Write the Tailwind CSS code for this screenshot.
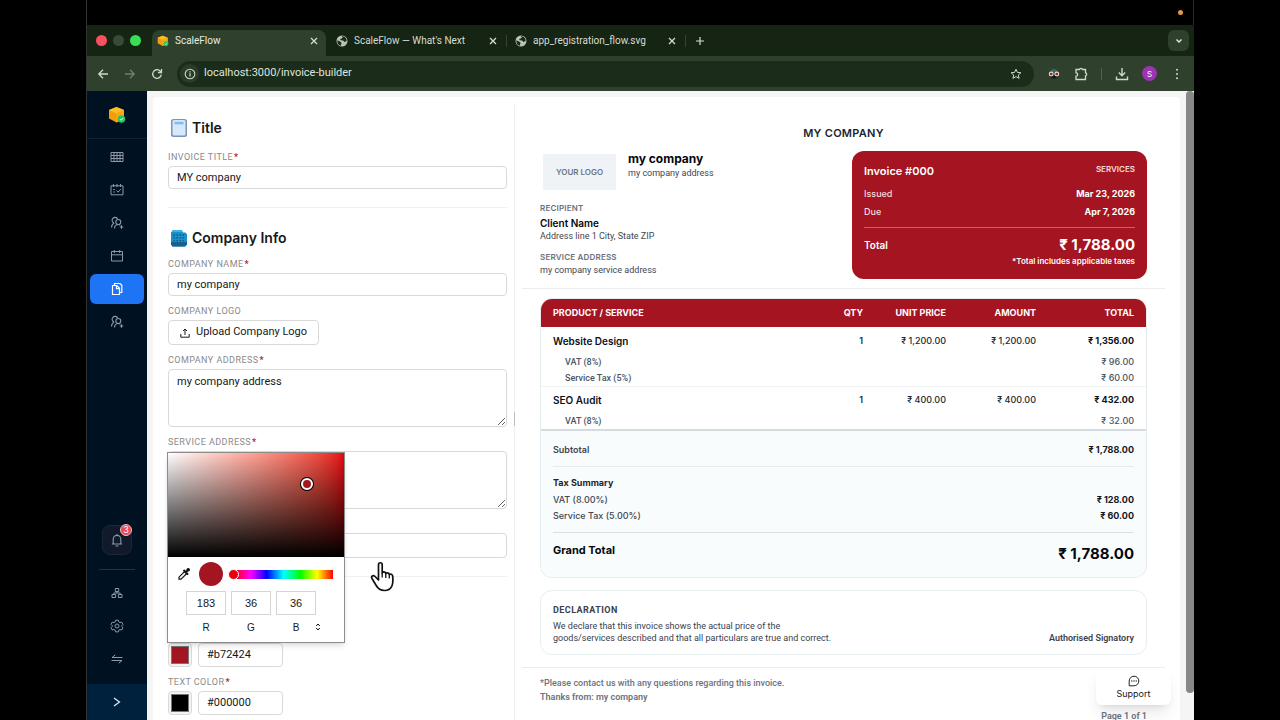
<!DOCTYPE html>
<html lang="en">
<head>
  <meta charset="UTF-8" />
  <meta name="viewport" content="width=device-width, initial-scale=1.0"/>
  <title>ScaleFlow</title>
  <script src="https://cdn.jsdelivr.net/npm/@tailwindcss/browser@4"></script>
</head>
<body class="h-screen overflow-hidden bg-black px-[86px] font-['Inter',sans-serif] text-[#16181c]">

  <!-- shared icons -->
  <svg class="hidden">
    <symbol id="box" viewBox="0 0 18 18">
      <path d="M8.500 1 16 4v8.500L8.500 16.500 1 12.500V4z" fill="#f59e0b"/>
      <path d="M8.500 1 16 4 8.500 7.500 1 4z" fill="#fbbf24"/>
      <path d="M8.500 7.500 16 4v8.500l-7.500 4z" fill="#f9a814"/>
      <circle cx="13.500" cy="13" r="3.700" fill="#22c55e"/>
      <path d="m11.800 13 1.300 1.300 2.200-2.400" fill="none" stroke="#eafff0" stroke-width="1"/>
    </symbol>
    <symbol id="globe" viewBox="0 0 12 12">
      <circle cx="6" cy="6" r="5.500" fill="#b9c4b6"/>
      <path d="M1.300 5.200 4 6.600l1.500 1.200-.6 2.900C2.800 10.500 1.200 8.500 1.300 5.200zM5.600 1.300l1.200.9-1 1.400-1.700.4.500 1.300 2.400.3 1.600 1.300 2-.8c.3-2.700-1.700-4.900-5-4.800z" fill="#1a2a18"/>
    </symbol>
    <symbol id="close" viewBox="0 0 8 8">
      <path d="m1 1 6 6M7 1 1 7" stroke="currentColor" stroke-width="1.300" fill="none"/>
    </symbol>
    <symbol id="people" viewBox="0 0 14 14">
      <g fill="none" stroke="currentColor" stroke-width="1.100">
        <path d="M4 7A2.900 2.900 0 1 1 7.600 3M1.500 11.500C1.600 9.300 2.400 7.800 4.200 7"/>
        <circle cx="8.300" cy="6" r="2.500"/>
        <path d="M4.500 12.500c.1-2.500 1.600-4 3.800-4 .8 0 1.500.2 2 .6M11.500 9.300v3.400M9.800 11h3.400"/>
      </g>
    </symbol>
  </svg>

  <div class="flex h-full flex-col border-l border-[#33352f]">
    <div class="flex h-[25px] shrink-0 items-center justify-end border-r border-[#2a2a2a] bg-black pr-[10px]">
      <span class="size-[5px] rounded-full bg-[#e8983a]"></span>
    </div>

    <!-- tab strip -->
    <header class="flex h-[31px] shrink-0 items-end bg-[#152413] pr-[5px] font-['Roboto',sans-serif] text-[10px] text-[#d5ddd2]">
      <div class="flex h-full w-[65px] shrink-0 items-center gap-[6px] pl-[9px]">
        <span class="size-[11px] rounded-full bg-[#f5515f]"></span>
        <span class="size-[11px] rounded-full bg-[#3a4a38]"></span>
        <span class="size-[11px] rounded-full bg-[#3ddc55]"></span>
      </div>
      <div class="flex h-[26px] w-[174px] items-center rounded-t-lg bg-[#2f412d] pr-2 pb-[5px] pl-[5px]">
        <svg class="size-3"><use href="#box"/></svg>
        <span class="ml-[6px] grow text-[#e6ece4]">ScaleFlow</span>
        <button aria-label="Close tab"><svg class="size-2"><use href="#close"/></svg></button>
      </div>
      <div class="flex h-[26px] w-[181px] items-center pb-[5px] pl-[10px]">
        <svg class="size-3"><use href="#globe"/></svg>
        <span class="ml-[6px] grow">ScaleFlow — What's Next</span>
        <button aria-label="Close tab"><svg class="size-2"><use href="#close"/></svg></button>
        <span class="ml-[9px] h-3 w-px bg-[#34452f]"></span>
      </div>
      <div class="flex h-[26px] w-[179px] items-center pb-[5px] pl-[8px]">
        <svg class="size-3"><use href="#globe"/></svg>
        <span class="ml-[6px] grow">app_registration_flow.svg</span>
        <button aria-label="Close tab"><svg class="size-2"><use href="#close"/></svg></button>
        <span class="ml-[9px] h-3 w-px bg-[#34452f]"></span>
      </div>
      <button aria-label="New tab" class="mb-[10px] ml-[9px]">
        <svg class="size-[10px]" viewBox="0 0 10 10"><path d="M5 1v8M1 5h8" stroke="#d5ddd2" stroke-width="1.200"/></svg>
      </button>
      <button aria-label="Search tabs" class="mb-[5px] ml-auto flex size-[21px] items-center justify-center rounded-md bg-[#2f412d]">
        <svg class="size-2" viewBox="0 0 8 8"><path d="m1.500 2.500 2.500 2.500 2.500-2.500" stroke="#e2e8e0" stroke-width="1.400" fill="none"/></svg>
      </button>
    </header>

    <!-- toolbar -->
    <div class="flex h-[35px] shrink-0 items-center bg-[#2f412d] pr-[15px] pl-[10px] text-[#cfd8cc]">
      <button aria-label="Back"><svg class="size-3" viewBox="0 0 12 12"><path d="M11 6H2M6 1.800 1.800 6 6 10.200" stroke="currentColor" stroke-width="1.300" fill="none"/></svg></button>
      <button aria-label="Forward" class="ml-[15px] text-[#6f7f6c]"><svg class="size-3" viewBox="0 0 12 12"><path d="M1 6h9M6 1.800 10.200 6 6 10.200" stroke="currentColor" stroke-width="1.300" fill="none"/></svg></button>
      <button aria-label="Reload" class="ml-[15px]"><svg class="size-3" viewBox="0 0 12 12"><path d="M10.300 6.500a4.300 4.300 0 1 1-1.300-3.600L10.400 4.400M10.500 1v3.500H7" stroke="currentColor" stroke-width="1.300" fill="none"/></svg></button>
      <div class="ml-[14px] flex h-[26px] grow items-center rounded-full bg-[#1b2c1a] pr-3 pl-[3px]">
        <span class="flex size-[19px] items-center justify-center rounded-full bg-[#2a3b28]">
          <svg class="size-3" viewBox="0 0 12 12"><circle cx="6" cy="6" r="4.800" fill="none" stroke="currentColor" stroke-width="1.100"/><path d="M6 5.300v3.200M6 3.300v1.200" stroke="currentColor" stroke-width="1.200"/></svg>
        </span>
        <input aria-label="Address" class="ml-[5px] grow bg-transparent font-['Roboto',sans-serif] text-[11px] text-[#dfe6dc] outline-none" value="localhost:3000/invoice-builder" />
        <button aria-label="Bookmark"><svg class="size-3" viewBox="0 0 12 12"><path d="m6 1.200 1.400 3.200 3.500.3-2.600 2.300.8 3.400L6 8.600l-3.100 1.800.8-3.400L1.100 4.700l3.500-.3z" fill="none" stroke="currentColor"/></svg></button>
      </div>
      <svg class="ml-[14px] size-3" viewBox="0 0 12 12"><path d="M2 4.500C2 2.500 3.800 1 6 1s4 1.500 4 3.500z" fill="#2f6b6f"/><path d="M2.500 7h7v2.500L6 11 2.500 9.500z" fill="#151c1c"/><circle cx="3.200" cy="6" r="1.900" fill="#7b2e33" stroke="#f0d6d0" stroke-width="1.100"/><circle cx="8.800" cy="6" r="1.900" fill="#7b2e33" stroke="#f0d6d0" stroke-width="1.100"/></svg>
      <button aria-label="Extensions" class="ml-[14px]"><svg class="size-[14px]" viewBox="0 0 14 14"><path d="M2 2.500h3.500a1.500 1.200 0 0 1 3 0H11.500v3.300a1.200 1.500 0 0 1 0 3v3.700H2V9.200a1.700 1.700 0 0 0 0-3.400z" stroke="currentColor" stroke-width="1.300" fill="none"/></svg></button>
      <span class="mx-[13px] h-3 w-px bg-[#50614d]"></span>
      <button aria-label="Downloads"><svg class="size-[14px]" viewBox="0 0 14 14"><path d="M7 1v7.500M3.800 5.500 7 8.700l3.200-3.200M1.500 9.500v3h11v-3" stroke="currentColor" stroke-width="1.400" fill="none"/></svg></button>
      <span class="ml-[13px] flex size-[15px] items-center justify-center rounded-full bg-[#9a34b0] text-[8px] text-white">S</span>
      <button aria-label="Menu" class="ml-[18px]"><svg class="h-3 w-1" viewBox="0 0 4 12"><g fill="currentColor"><circle cx="2" cy="1.800" r="1"/><circle cx="2" cy="6" r="1"/><circle cx="2" cy="10.200" r="1"/></g></svg></button>
    </div>

    <div class="flex min-h-0 grow bg-[#f5f5f5]">

      <!-- sidebar -->
      <aside class="flex w-[60px] shrink-0 flex-col bg-[#001122] text-[#8d99a6]">
        <div class="flex h-[48px] shrink-0 items-center justify-center border-b border-[#0d2236]">
          <svg class="size-[18px]"><use href="#box"/></svg>
        </div>
        <nav class="flex flex-col gap-[3px] px-[3px] pt-[3px]">
          <a href="#" aria-label="Dashboard" class="flex h-[30px] items-center justify-center">
            <svg class="size-[14px]" viewBox="0 0 14 14"><path d="M1 2.500h12v9H1zM1 5.500h12M1 8.500h12M4 2.500v9M7 2.500v9M10 2.500v9" stroke="currentColor" fill="none"/></svg>
          </a>
          <a href="#" aria-label="Schedule" class="flex h-[30px] items-center justify-center">
            <svg class="size-[14px]" viewBox="0 0 14 14"><path d="M1 2.800h12v9H1zM3.500 1v3M7 1v3M10.500 1v3M3.200 6.500h1.600M3.200 9h1.600M6.500 7.500 8 9.200l2.800-3" stroke="currentColor" fill="none"/></svg>
          </a>
          <a href="#" aria-label="Team" class="flex h-[30px] items-center justify-center">
            <svg class="size-[14px]"><use href="#people"/></svg>
          </a>
          <a href="#" aria-label="Calendar" class="flex h-[30px] items-center justify-center">
            <svg class="size-[14px]" viewBox="0 0 14 14"><path d="M1.500 2.500h11v9.500h-11zM1.500 5.800h11M4.300 1v3M9.700 1v3" stroke="currentColor" fill="none"/></svg>
          </a>
          <a href="#" aria-label="Invoices" class="flex h-[30px] items-center justify-center rounded-md bg-[#1d74f5] text-white">
            <svg class="size-[14px]" viewBox="0 0 14 14"><path d="M2.500 3.500h4.300l2.700 2.800V12.500h-7zM6.500 3.700v2.900h2.900M4.500 3.300V1.500H10l1.800 1.700v7.300H9.700" stroke="currentColor" stroke-width="1.200" fill="none"/></svg>
          </a>
          <a href="#" aria-label="Clients" class="flex h-[30px] items-center justify-center">
            <svg class="size-[14px]"><use href="#people"/></svg>
          </a>
        </nav>
        <div class="mt-auto flex flex-col items-center">
          <button aria-label="Notifications" class="relative flex size-[30px] items-center justify-center rounded-lg border border-[#1c2638] bg-[#111a2b]">
            <svg class="size-[14px]" viewBox="0 0 14 14"><path d="M1.800 11h10.400M3.200 11V6.200a3.800 3.800 0 0 1 7.600 0V11M7 1v1.300M5.500 13h3" stroke="currentColor" stroke-width="1.100" fill="none"/></svg>
            <span class="absolute -top-[2px] -right-[1px] flex size-3 items-center justify-center rounded-full border border-[#f4b7bc] bg-[#e5485a] text-[9px] text-white">3</span>
          </button>
          <span class="mt-[14px] h-px w-9 bg-[#25323f]"></span>
        </div>
        <nav class="flex flex-col gap-[3px] px-[3px] pt-[8px] pb-[10px]">
          <a href="#" aria-label="Workspace" class="flex h-[30px] items-center justify-center">
            <svg class="size-3" viewBox="0 0 12 12"><path d="M4.300 1.500h3.400v3H4.300zM1 7.500h3.600v3H1zM7.400 7.500H11v3H7.400zM6 4.500V6M2.800 7.500V6h6.400v1.500" stroke="currentColor" fill="none"/></svg>
          </a>
          <a href="#" aria-label="Settings" class="flex h-[30px] items-center justify-center">
            <svg class="size-[14px]" viewBox="0 0 14 14"><path d="M5.600 1.200h2.800l.4 1.700 1.200.7 1.700-.5 1.300 2.300L11.800 6.600v.9l1.200 1.200-1.300 2.300-1.700-.5-1.200.7-.4 1.700H5.600l-.4-1.700-1.200-.7-1.700.5L1 8.700l1.200-1.200v-.9L1 5.400l1.300-2.300 1.700.5 1.200-.7z" stroke="currentColor" fill="none"/><circle cx="7" cy="7" r="2" stroke="currentColor" fill="none"/></svg>
          </a>
          <a href="#" aria-label="Switch" class="flex h-[30px] items-center justify-center">
            <svg class="size-3" viewBox="0 0 12 12"><path d="M11.500 4.500H1L4.300 1.800M.5 7.500H11L7.700 10.200" stroke="currentColor" fill="none"/></svg>
          </a>
        </nav>
        <button aria-label="Expand" class="flex h-9 shrink-0 items-center justify-center bg-[#00213d] text-[#e8eef4]">
          <svg class="size-[10px]" viewBox="0 0 10 10"><path d="m2 1 5.500 4L2 9" stroke="currentColor" stroke-width="1.200" fill="none"/></svg>
        </button>
      </aside>

      <main class="relative mt-[6px] mr-[6px] ml-[6px] flex min-w-0 grow rounded-t bg-white">

        <!-- form -->
        <form class="w-[361px] shrink-0 pt-[17px] pr-[7px] pl-[15px] font-['Roboto',sans-serif] text-[11px]">
          <section class="border-b border-[#f0f0f0] pb-[18px]">
            <h2 class="mb-2 flex items-center gap-1 font-['Inter',sans-serif] text-[14px] leading-7 font-semibold">
              <svg class="ml-[2px] size-[18px]" viewBox="0 0 18 18"><rect x="1" y="0" width="16" height="18" rx="2.500" fill="#7d93b5"/><rect x="2.500" y="1" width="13" height="15.500" rx="1.500" fill="#d6e9fb"/><path d="M4.500 2.800h9v2.500h-9z" fill="#7dbdf0"/></svg>
              Title
            </h2>
            <label for="invoiceTitle" class="mb-[2px] block text-[9px] leading-[14px] tracking-wider text-[#8a8a8a]">INVOICE TITLE<span class="ml-px font-bold text-[#b72424]">*</span></label>
            <input id="invoiceTitle" class="block h-[23px] w-full rounded border border-[#d9d9d9] px-2" value="MY company" />
          </section>

          <section class="flex flex-col gap-2 border-b border-[#f0f0f0] pt-4 pb-[18px]">
            <h2 class="-mb-[3px] flex items-center gap-1 font-['Inter',sans-serif] text-[14px] leading-7 font-semibold">
              <svg class="ml-[2px] size-[18px]" viewBox="0 0 18 18"><path d="M3 1h9l1 2.500h2.500l1.500 2v10l-2 2H2.500L1 15.500V3.500z" fill="#1b8fc9"/><path d="M1 13h16v2.500L15 17.500H2.500L1 15.500z" fill="#17618f"/><path d="M3.500 6h11M3.500 8.800h11M3.500 11.600h11" stroke="#0d5a88" stroke-width="1.300" stroke-dasharray="1.500 1.500"/><path d="M3 1h9v2H2z" fill="#35b5e5"/></svg>
              Company Info
            </h2>
            <div>
              <label for="companyName" class="mb-[2px] block text-[9px] leading-[14px] tracking-wider text-[#8a8a8a]">COMPANY NAME<span class="ml-px font-bold text-[#b72424]">*</span></label>
              <input id="companyName" class="block h-[23px] w-full rounded border border-[#d9d9d9] px-2" value="my company" />
            </div>
            <div>
              <label for="companyLogo" class="mb-[2px] block text-[9px] leading-[14px] tracking-wider text-[#8a8a8a]">COMPANY LOGO</label>
              <button id="companyLogo" type="button" class="flex h-[25px] items-center gap-[6px] rounded border border-[#d9d9d9] px-[11px]">
                <svg class="size-[10px]" viewBox="0 0 10 10"><path d="M.8 6v3.200h8.400V6M5 7V1M3 3l2-2 2 2" stroke="currentColor" fill="none"/></svg>
                Upload Company Logo
              </button>
            </div>
            <div>
              <label for="companyAddress" class="mb-[2px] block text-[9px] leading-[14px] tracking-wider text-[#8a8a8a]">COMPANY ADDRESS<span class="ml-px font-bold text-[#b72424]">*</span></label>
              <textarea id="companyAddress" class="block h-[58px] w-full rounded border border-[#d9d9d9] px-2 py-1">my company address</textarea>
            </div>
            <div>
              <label for="serviceAddress" class="mb-[2px] block text-[9px] leading-[14px] tracking-wider text-[#8a8a8a]">SERVICE ADDRESS<span class="ml-px font-bold text-[#b72424]">*</span></label>
              <textarea id="serviceAddress" class="block h-[58px] w-full rounded border border-[#d9d9d9] px-2 py-1"></textarea>
            </div>
            <div class="pt-4">
              <input aria-label="Company phone" class="block h-[25px] w-full rounded border border-[#d9d9d9] px-2" />
            </div>
          </section>

          <section class="flex flex-col gap-2 pt-[66px]">
            <div class="relative flex h-6 gap-[6px]">
              <input type="color" aria-label="Theme color" value="#a31621" class="h-6 w-6 rounded border border-[#d9d9d9] bg-[#f3f3f3] p-0 [&::-webkit-color-swatch-wrapper]:p-[2px]" />
              <input aria-label="Theme color hex" class="w-[85px] rounded border border-[#d9d9d9] px-2" value="#b72424" />

              <!-- color picker -->
              <div class="absolute bottom-full -left-px z-10 w-[178px] border border-[#8c8c8c] bg-white font-['Liberation_Sans',sans-serif] shadow-md">
                <div class="relative h-[104px] bg-linear-to-r from-white to-[#e6000f]">
                  <div class="h-full bg-linear-to-t from-black to-transparent"></div>
                  <span class="absolute top-[25px] left-[133px] size-3 rounded-full border-2 border-white bg-[#a31621] ring-1 ring-black"></span>
                </div>
                <div class="flex h-[34px] items-center pr-[11px] pl-[9px]">
                  <button type="button" aria-label="Pick from screen">
                    <svg class="size-[14px]" viewBox="0 0 14 14"><path d="M2 12.200v-2l5.500-5.500 2 2L4 12.200z" fill="none" stroke="#111" stroke-width="1.200"/><path d="m6.500 3 4.600 4.600M8.500 5.500l3-3" stroke="#111" stroke-width="2"/><circle cx="11.200" cy="2.800" r="1.800" fill="#111"/></svg>
                  </button>
                  <span class="ml-2 size-6 rounded-full bg-[#a31621]"></span>
                  <div class="relative ml-[11px] h-[9px] grow bg-[linear-gradient(to_right,#f00,#f0f_17%,#00f_33%,#0ff_50%,#0f0_67%,#ff0_84%,#f00)]">
                    <span class="absolute -top-px -left-[6px] size-[11px] rounded-full border border-white bg-[#e8000b]"></span>
                  </div>
                </div>
                <div class="flex h-[51px] gap-[5px] pl-[18px] text-center text-[10px]">
                  <div class="w-10"><input id="red" class="block h-6 w-10 border border-[#d5d5d5] text-center text-[11px]" value="183" /><label for="red" class="mt-[5px] block">R</label></div>
                  <div class="w-10"><input id="green" class="block h-6 w-10 border border-[#d5d5d5] text-center text-[11px]" value="36" /><label for="green" class="mt-[5px] block">G</label></div>
                  <div class="w-10"><input id="blue" class="block h-6 w-10 border border-[#d5d5d5] text-center text-[11px]" value="36" /><label for="blue" class="mt-[5px] block">B</label></div>
                  <button type="button" aria-label="Color format" class="mt-5 -ml-[6px]">
                    <svg class="h-2 w-[6px]" viewBox="0 0 6 8"><path d="m1.200 3 1.800-2 1.800 2M1.200 5 3 7l1.800-2" stroke="#111" fill="none"/></svg>
                  </button>
                </div>
              </div>
            </div>
            <div>
              <label for="textColor" class="mb-[2px] block text-[9px] leading-[14px] tracking-wider text-[#8a8a8a]">TEXT COLOR<span class="ml-px font-bold text-[#b72424]">*</span></label>
              <div class="flex h-6 gap-[6px]">
                <input type="color" aria-label="Text color" value="#000000" class="h-6 w-6 rounded border border-[#d9d9d9] bg-[#f3f3f3] p-0 [&::-webkit-color-swatch-wrapper]:p-[2px]" />
                <input id="textColor" class="w-[85px] rounded border border-[#d9d9d9] px-2" value="#000000" />
              </div>
            </div>
          </section>
        </form>

        <div class="mt-2 w-px shrink-0 bg-[#efefef] pt-[307px]"><div class="h-[14px] w-px bg-[#bdbdbd]"></div></div>

        <!-- invoice preview -->
        <article class="min-w-0 grow pr-[15px] pl-[7px] text-[9px] leading-3">
          <h1 class="pt-7 text-center text-[11px] leading-4 font-semibold tracking-wide text-[#1b2430]">MY COMPANY</h1>
          <div class="mt-[10px] flex items-start justify-between border-b border-[#ececec] px-[18px] pb-[9px]">
            <div>
              <div class="flex gap-3 pl-[3px]">
                <div class="mt-[3px] flex h-9 w-[73px] items-center justify-center bg-[#eff3f7] text-[8px] font-semibold text-[#6b7684]">YOUR LOGO</div>
                <div>
                  <p class="text-[12px] leading-4 font-bold text-[#05070d]">my company</p>
                  <p class="font-['Roboto',sans-serif] text-[#3f4652]">my company address</p>
                </div>
              </div>
              <p class="mt-3 text-[8px] font-semibold tracking-wide text-[#6b7280]">RECIPIENT</p>
              <p class="mt-[2px] text-[10px] leading-[14px] font-semibold text-[#05070d]">Client Name</p>
              <p class="font-['Roboto',sans-serif] text-[#3f4652]">Address line 1 City, State ZIP</p>
              <p class="mt-[9px] text-[8px] font-semibold tracking-wide text-[#6b7280]">SERVICE ADDRESS</p>
              <p class="mt-px font-['Roboto',sans-serif] text-[#3f4652]">my company service address</p>
            </div>
            <div class="w-[295px] rounded-xl bg-[#a41421] px-3 pt-3 pb-3 text-white">
              <div class="flex justify-between">
                <h2 class="text-[11px] leading-4 font-semibold">Invoice #000</h2>
                <span class="text-[8px] font-semibold text-[#f6dcde]">SERVICES</span>
              </div>
              <div class="mt-[9px] flex justify-between leading-3"><span class="font-medium text-[#f6dcde]">Issued</span><b>Mar 23, 2026</b></div>
              <div class="mt-[6px] flex justify-between border-b border-[#c9626b] pb-[9px]"><span class="font-medium text-[#f6dcde]">Due</span><b>Apr 7, 2026</b></div>
              <div class="mt-[7px] flex items-center justify-between leading-5"><span class="text-[10px] font-semibold">Total</span><b class="text-[15px]">₹ 1,788.00</b></div>
              <p class="text-right text-[8px] font-semibold">*Total includes applicable taxes</p>
            </div>
          </div>

          <div class="mx-[18px] mt-[9px] overflow-hidden rounded-xl border border-[#e3ebee]">
            <table class="w-full table-fixed">
              <colgroup><col><col class="w-[60px]"><col class="w-[83px]"><col class="w-[90px]"><col class="w-[110px]"></colgroup>
              <thead class="bg-[#a41421] text-right text-white">
                <tr class="h-7">
                  <th class="pl-3 text-left">PRODUCT / SERVICE</th>
                  <th>QTY</th>
                  <th>UNIT PRICE</th>
                  <th>AMOUNT</th>
                  <th class="pr-3">TOTAL</th>
                </tr>
              </thead>
              <tbody class="text-right text-[#222936]">
                <tr class="h-[27px] font-semibold">
                  <td class="pl-3 text-left text-[10px] text-[#0c111a]">Website Design</td>
                  <td>1</td>
                  <td class="font-medium">₹ 1,200.00</td>
                  <td class="font-medium">₹ 1,200.00</td>
                  <td class="pr-3 font-bold text-[#0c111a]">₹ 1,356.00</td>
                </tr>
                <tr class="h-4 font-medium text-[#4b5563]">
                  <td class="pl-6 text-left font-['Roboto',sans-serif]">VAT (8%)</td>
                  <td colspan="4" class="pr-3">₹ 96.00</td>
                </tr>
                <tr class="h-4 font-medium text-[#4b5563]">
                  <td class="pl-6 text-left font-['Roboto',sans-serif]">Service Tax (5%)</td>
                  <td colspan="4" class="pr-3">₹ 60.00</td>
                </tr>
                <tr class="h-[27px] border-t border-[#f0f2f4] font-semibold">
                  <td class="pl-3 text-left text-[10px] text-[#0c111a]">SEO Audit</td>
                  <td>1</td>
                  <td class="font-medium">₹ 400.00</td>
                  <td class="font-medium">₹ 400.00</td>
                  <td class="pr-3 font-bold text-[#0c111a]">₹ 432.00</td>
                </tr>
                <tr class="h-4 font-medium text-[#4b5563]">
                  <td class="pl-6 text-left font-['Roboto',sans-serif]">VAT (8%)</td>
                  <td colspan="4" class="pr-3">₹ 32.00</td>
                </tr>
              </tbody>
            </table>
            <div class="border-t-2 border-[#d5dcdf] bg-[#f8fcfd] px-3 leading-4 text-[#3f4652]">
              <div class="flex h-9 items-center justify-between border-b border-[#e6ebee] pt-[3px]"><span class="font-semibold">Subtotal</span><b class="text-[#11161f]">₹ 1,788.00</b></div>
              <div class="border-b border-[#d9dfe3] py-2">
                <p class="mb-px font-bold text-[#1f2631]">Tax Summary</p>
                <div class="flex justify-between"><span class="font-medium">VAT (8.00%)</span><b class="text-[#11161f]">₹ 128.00</b></div>
                <div class="flex justify-between"><span class="font-medium">Service Tax (5.00%)</span><b class="text-[#11161f]">₹ 60.00</b></div>
              </div>
              <div class="flex items-start justify-between pt-[10px] pb-3 font-bold text-[#05070d]"><span class="text-[11px] leading-[14px]">Grand Total</span><span class="text-[15px] leading-[22px]">₹ 1,788.00</span></div>
            </div>
          </div>

          <div class="mt-3 border-b border-[#ececec] px-[18px] pb-3 font-['Roboto',sans-serif]">
            <div class="flex items-end justify-between rounded-xl border border-[#e6eeee] px-3 pt-[13px] pb-[10px]">
              <div class="w-[300px] text-[#3a414c]">
                <h3 class="mb-1 font-bold tracking-wider">DECLARATION</h3>
                <p>We declare that this invoice shows the actual price of the<br>goods/services described and that all particulars are true and correct.</p>
              </div>
              <span class="font-semibold text-[#3a414c]">Authorised Signatory</span>
            </div>
          </div>
          <footer class="px-[18px] pt-[9px] font-['Roboto',sans-serif] text-[#6b7280]">
            <p class="font-medium">*Please contact us with any questions regarding this invoice.</p>
            <p class="mt-[2px] font-semibold">Thanks from: my company</p>
            <p class="mt-[7px] text-right font-semibold">Page 1 of 1</p>
          </footer>
        </article>

        <button class="absolute right-[9px] bottom-[15px] flex h-9 w-[75px] flex-col items-center justify-center rounded-md bg-white text-[9px] leading-3 shadow-lg">
          <svg class="mb-px size-3" viewBox="0 0 12 12"><path d="M1.200 10.800V6A4.800 4.800 0 1 1 6 10.800z" stroke="#222" fill="none"/><g fill="#222"><circle cx="3.800" cy="6" r=".7"/><circle cx="6" cy="6" r=".7"/><circle cx="8.200" cy="6" r=".7"/></g></svg>
          Support
        </button>

        <!-- hand pointer -->
        <svg class="pointer-events-none absolute top-[464px] left-[217px] z-20 h-8 w-[26px]" viewBox="0 0 26 32">
          <path d="M8.500 19V3.700c0-2.600 3.700-2.600 3.700 0V12c.3-1.700 3.300-1.600 3.600.6.700-1.300 3.200-1 3.500 1 1-1 3.200-.6 3.400 1.500.3 3.400.5 6.600-.6 9.400-1.200 3.200-4 5-7.600 5-4 0-6.400-1.500-8.300-5L2 17.500c-1.200-2.300 1.200-3.900 3-2z" fill="#fff" stroke="#111" stroke-width="1.700" stroke-linejoin="round"/>
          <path d="M12.200 12v4.500M15.800 13v4M19.300 14v3.500" stroke="#111" stroke-width="1.300"/>
        </svg>
      </main>

      <div class="w-2 shrink-0 pb-[27px]"><div class="h-full w-2 rounded-full bg-[#878787]"></div></div>
    </div>
  </div>
</body>
</html>
